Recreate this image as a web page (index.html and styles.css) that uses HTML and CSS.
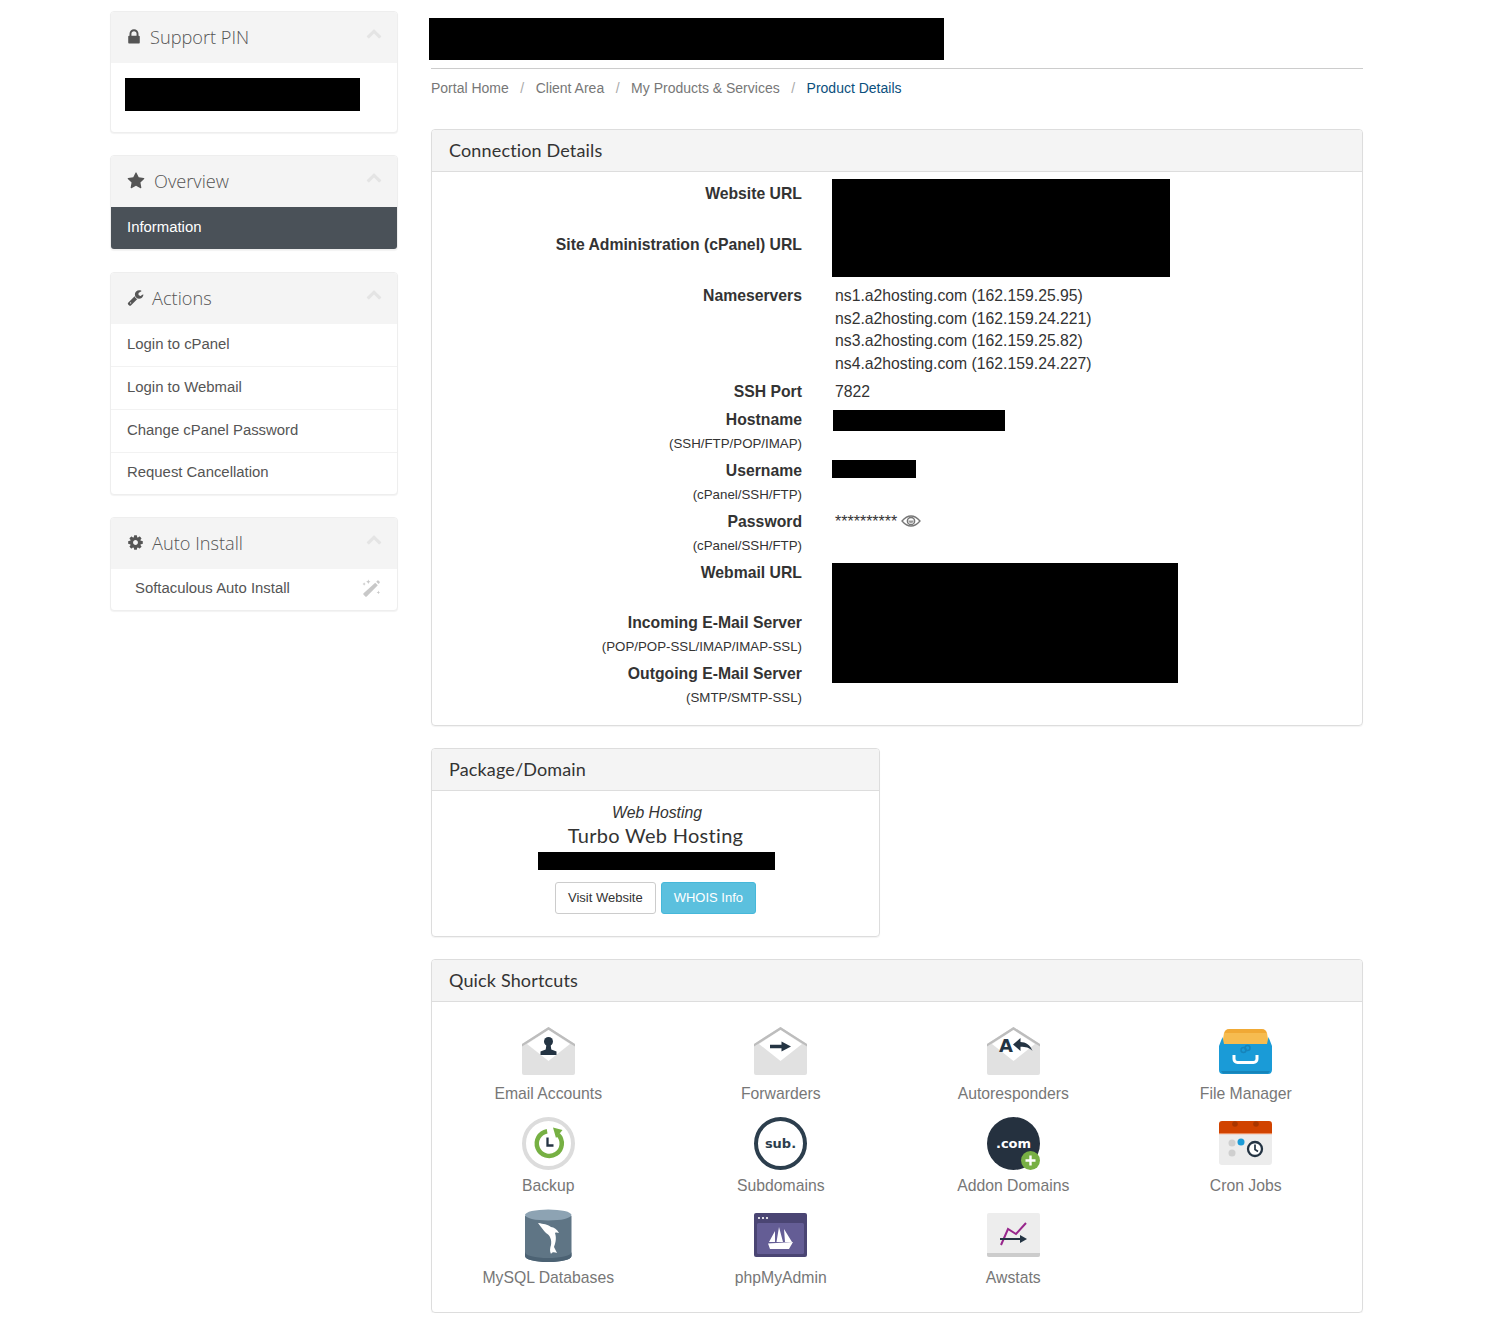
FILE: index.html
```html
<!DOCTYPE html>
<html lang="en">

<head>
  <meta charset="UTF-8" />
  <title>Product Details</title>
  <link rel="stylesheet" href="styles.css">
</head>

<body>
  <svg class="sprite" xmlns="http://www.w3.org/2000/svg">
    <symbol id="i-lock" viewBox="0 0 1792 1792"><path d="M640 768h512v-192q0-106-75-181t-181-75-181 75-75 181v192zm832 96v576q0 40-28 68t-68 28h-960q-40 0-68-28t-28-68v-576q0-40 28-68t68-28h32v-192q0-184 132-316t316-132 316 132 132 316v192h32q40 0 68 28t28 68z"/></symbol>
    <symbol id="i-star" viewBox="0 0 1792 1792"><path d="M1728 647q0 22-26 48l-363 354 86 500q1 7 1 20 0 21-10.500 35.500t-30.500 14.500q-19 0-40-12l-449-236-449 236q-22 12-40 12-21 0-31.500-14.500t-10.500-35.500q0-6 2-20l86-500-364-354q-25-27-25-48 0-37 56-46l502-73 225-455q19-41 49-41t49 41l225 455 502 73q56 9 56 46z"/></symbol>
    <symbol id="i-wrench" viewBox="0 0 1792 1792"><path d="M448 1472q0-26-19-45t-45-19-45 19-19 45 19 45 45 19 45-19 19-45zm644-420l-682 682q-37 37-90 37-52 0-91-37l-106-108q-38-36-38-90 0-53 38-91l681-681q39 98 114.500 173.500t173.500 114.500zm634-435q0 39-23 106-47 134-164.500 217.500t-258.500 83.500q-185 0-316.500-131.500t-131.500-316.500 131.500-316.500 316.500-131.500q58 0 121.500 16.500t107.500 46.500q16 11 16 28t-16 28l-293 169v224l193 107q5-3 79-48.500t135.500-81 70.500-35.500q15 0 23.500 10t8.500 25z"/></symbol>
    <symbol id="i-cog" viewBox="0 0 1792 1792"><path d="M1152 896q0-106-75-181t-181-75-181 75-75 181 75 181 181 75 181-75 75-181zm512-109v222q0 12-8 23t-20 13l-185 28q-19 54-39 91 35 50 107 138 10 12 10 25t-9 23q-27 37-99 108t-94 71q-12 0-26-9l-138-108q-44 23-91 38-16 136-29 186-7 28-36 28h-222q-14 0-24.500-8.500t-11.500-21.500l-28-184q-49-16-90-37l-141 107q-10 9-25 9-14 0-25-11-126-114-165-168-7-10-7-23 0-12 8-23 15-21 51-66.500t54-70.500q-27-50-41-99l-183-27q-13-2-21-12.500t-8-23.500v-222q0-12 8-23t19-13l186-28q14-46 39-92-40-57-107-138-10-12-10-24 0-10 9-23 26-36 98.500-107.500t94.500-71.500q13 0 26 10l138 107q44-23 91-38 16-136 29-186 7-28 36-28h222q14 0 24.500 8.500t11.500 21.500l28 184q49 16 90 37l142-107q9-9 24-9 13 0 25 10 129 119 165 170 7 8 7 22 0 12-8 23-15 21-51 66.500t-54 70.500q26 50 41 98l183 28q13 2 21 12.500t8 23.500z"/></symbol>
    <symbol id="i-up" viewBox="0 0 1792 1792"><path d="M1683 1331l-166 165q-19 19-45 19t-45-19l-531-531-531 531q-19 19-45 19t-45-19l-166-165q-19-19-19-45.500t19-45.500l742-741q19-19 45-19t45 19l742 741q19 19 19 45.500t-19 45.500z"/></symbol>
    <symbol id="i-envelope" viewBox="0 0 53 53">
      <path d="M0 19 26.500 2 53 19v29a2 2 0 0 1-2 2H2a2 2 0 0 1-2-2z" fill="#e1e1e1"/>
      <path d="M0 19 26.500 2 53 19v2.500L26.500 5 0 21.500z" fill="#bdbdbd"/>
      <path d="M26.500 5 48 19 26.500 36 5 19z" fill="#fff"/>
    </symbol>
  </svg>

  <div class="pagina">
    <aside class="lateral">
      <div class="caja">
        <div class="caja-titulo">
          <svg class="ico ico-lock"><use href="#i-lock"/></svg>
          <span>Support PIN</span>
          <svg class="flecha"><use href="#i-up"/></svg>
        </div>
        <div class="caja-pin">
          <div class="tapa tapa-pin"></div>
        </div>
      </div>

      <div class="caja">
        <div class="caja-titulo">
          <svg class="ico ico-star"><use href="#i-star"/></svg>
          <span>Overview</span>
          <svg class="flecha"><use href="#i-up"/></svg>
        </div>
        <a class="opcion activa">Information</a>
      </div>

      <div class="caja">
        <div class="caja-titulo">
          <svg class="ico ico-tool"><use href="#i-wrench"/></svg>
          <span>Actions</span>
          <svg class="flecha"><use href="#i-up"/></svg>
        </div>
        <a class="opcion">Login to cPanel</a>
        <a class="opcion">Login to Webmail</a>
        <a class="opcion">Change cPanel Password</a>
        <a class="opcion">Request Cancellation</a>
      </div>

      <div class="caja">
        <div class="caja-titulo">
          <svg class="ico ico-tool"><use href="#i-cog"/></svg>
          <span>Auto Install</span>
          <svg class="flecha"><use href="#i-up"/></svg>
        </div>
        <a class="opcion opcion-auto">
          <span>Softaculous Auto Install</span>
          <svg class="varita" viewBox="0 0 18 18">
            <path d="M12.500 3.500 15 6 4.500 16.500a1 1 0 0 1-1.400 0L1.500 14.900a1 1 0 0 1 0-1.400z" fill="#c8c8c8"/>
            <path d="M13.500 2.500 14.400 1.600a1 1 0 0 1 1.400 0l.8.800a1 1 0 0 1 0 1.400L15.700 4.700z" fill="#c8c8c8"/>
            <path d="M6 0.500 6.600 2 8 2.600 6.600 3.200 6 4.700 5.400 3.200 4 2.600 5.400 2zM2 3 2.500 4.200 3.500 4.700 2.500 5.200 2 6.400 1.500 5.200.5 4.700 1.500 4.200zM15.500 11 16 12.200 17.200 12.700 16 13.200 15.500 14.400 15 13.200 13.800 12.700 15 12.200z" fill="#c8c8c8"/>
          </svg>
        </a>
      </div>
    </aside>

    <main class="contenido">
      <div class="encabezado">
        <div class="tapa tapa-titulo"></div>
      </div>

      <ol class="migas">
        <li>Portal Home</li>
        <li>Client Area</li>
        <li>My Products &amp; Services</li>
        <li class="actual">Product Details</li>
      </ol>

      <section class="panel">
        <h3 class="panel-titulo">Connection Details</h3>
        <div class="datos">
          <div class="fila"><div class="etiqueta"><strong>Website URL</strong><small>&nbsp;</small></div><div class="valor"></div></div>
          <div class="fila"><div class="etiqueta"><strong>Site Administration (cPanel) URL</strong><small>&nbsp;</small></div><div class="valor"></div></div>
          <div class="fila">
            <div class="etiqueta"><strong>Nameservers</strong></div>
            <div class="valor">
              ns1.a2hosting.com (162.159.25.95)<br>
              ns2.a2hosting.com (162.159.24.221)<br>
              ns3.a2hosting.com (162.159.25.82)<br>
              ns4.a2hosting.com (162.159.24.227)
            </div>
          </div>
          <div class="fila"><div class="etiqueta"><strong>SSH Port</strong></div><div class="valor">7822</div></div>
          <div class="fila"><div class="etiqueta"><strong>Hostname</strong><small>(SSH/FTP/POP/IMAP)</small></div><div class="valor"></div></div>
          <div class="fila"><div class="etiqueta"><strong>Username</strong><small>(cPanel/SSH/FTP)</small></div><div class="valor"></div></div>
          <div class="fila">
            <div class="etiqueta"><strong>Password</strong><small>(cPanel/SSH/FTP)</small></div>
            <div class="valor clave">
              <span>**********</span>
              <svg class="ojo" viewBox="0 0 20 12">
                <path d="M1 6C4 2.500 7 1 10 1s6 1.500 9 5c-3 3.500-6 5-9 5S4 9.500 1 6z" fill="none" stroke="#777" stroke-width="1.300"/>
                <circle cx="10" cy="6" r="3.600" fill="none" stroke="#777" stroke-width="1.500"/>
                <path d="M7.500 5.500a2.500 2.500 0 0 0 5 0" fill="#999"/>
              </svg>
            </div>
          </div>
          <div class="fila"><div class="etiqueta"><strong>Webmail URL</strong><small>&nbsp;</small></div><div class="valor"></div></div>
          <div class="fila"><div class="etiqueta"><strong>Incoming E-Mail Server</strong><small>(POP/POP-SSL/IMAP/IMAP-SSL)</small></div><div class="valor"></div></div>
          <div class="fila"><div class="etiqueta"><strong>Outgoing E-Mail Server</strong><small>(SMTP/SMTP-SSL)</small></div><div class="valor"></div></div>

          <div class="tapa tapa-urls"></div>
          <div class="tapa tapa-host"></div>
          <div class="tapa tapa-user"></div>
          <div class="tapa tapa-correo"></div>
        </div>
      </section>

      <section class="panel panel-chico">
        <h3 class="panel-titulo">Package/Domain</h3>
        <div class="paquete">
          <em>Web Hosting</em>
          <h4>Turbo Web Hosting</h4>
          <div class="tapa tapa-dominio"></div>
          <div class="botones">
            <a class="boton">Visit Website</a>
            <a class="boton boton-info">WHOIS Info</a>
          </div>
        </div>
      </section>

      <section class="panel panel-ultimo">
        <h3 class="panel-titulo">Quick Shortcuts</h3>
        <div class="atajos">
          <a class="atajo">
            <svg class="icono" viewBox="0 0 53 53">
              <use href="#i-envelope"/>
              <circle cx="26.500" cy="16.500" r="4.500" fill="#243443"/>
              <path d="M24.500 19h4l.8 5.500 5.200 2V30h-16v-3.500l5.200-2z" fill="#243443"/>
            </svg>
            <span>Email Accounts</span>
          </a>
          <a class="atajo">
            <svg class="icono" viewBox="0 0 53 53">
              <use href="#i-envelope"/>
              <path d="M16 19.800h11.500v-3.300l9.500 5-9.500 5v-3.300H16z" fill="#243443"/>
            </svg>
            <span>Forwarders</span>
          </a>
          <a class="atajo">
            <svg class="icono" viewBox="0 0 53 53">
              <use href="#i-envelope"/>
              <text x="12" y="27" class="letra-a">A</text>
              <path d="M26 19.500 33.500 13v4c5 0 10 3 12 9-3-3.500-7-4.300-12-4.300V26z" fill="#243443"/>
            </svg>
            <span>Autoresponders</span>
          </a>
          <a class="atajo">
            <svg class="icono" viewBox="0 0 53 53">
              <path d="M5 9a5 5 0 0 1 5-5h33a5 5 0 0 1 5 5v6H5z" fill="#f0a935"/>
              <path d="M3 20 5 8h43l2 12z" fill="#f6bc50"/>
              <path d="M0 21 3.500 12 5 19h43l1.500-7L53 21v24a4 4 0 0 1-4 4H4a4 4 0 0 1-4-4z" fill="#1a9bd7"/>
              <path d="M2 46h49l-2 2.500H4z" fill="#1684ba"/>
              <path d="M15 30v4a3.500 3.500 0 0 0 3.500 3.500h16A3.500 3.500 0 0 0 38 34v-4" fill="none" stroke="#fff" stroke-width="3"/>
              <circle cx="24.500" cy="25" r="2.500" fill="none" stroke="#1684ba" stroke-width="1.500"/>
              <circle cx="28.500" cy="23" r="2.500" fill="none" stroke="#1684ba" stroke-width="1.500"/>
            </svg>
            <span>File Manager</span>
          </a>

          <a class="atajo">
            <svg class="icono" viewBox="0 0 53 53">
              <circle cx="26.500" cy="26.500" r="24.500" fill="#fff" stroke="#dcdcdc" stroke-width="4"/>
              <path d="M33.500 15.500A12.500 12.500 0 1 1 22 15" fill="none" stroke="#76b043" stroke-width="4.500" transform="rotate(15 26.500 26.500)"/>
              <path d="M31 10.500 40.500 13 34 21z" fill="#76b043"/>
              <path d="M25.500 20.500v8h6" fill="none" stroke="#243443" stroke-width="2.300"/>
            </svg>
            <span>Backup</span>
          </a>
          <a class="atajo">
            <svg class="icono" viewBox="0 0 53 53">
              <circle cx="26.500" cy="26.500" r="24.500" fill="#fff" stroke="#2c3e4d" stroke-width="4"/>
              <text x="26.500" y="31" class="letra-sub">sub.</text>
            </svg>
            <span>Subdomains</span>
          </a>
          <a class="atajo">
            <svg class="icono" viewBox="0 0 53 53">
              <circle cx="26.500" cy="26.500" r="26.500" fill="#25313f"/>
              <text x="26.500" y="31" class="letra-com">.com</text>
              <circle cx="43.500" cy="43.500" r="9.500" fill="#78b044"/>
              <path d="M42.300 38.500h2.400v3.800h3.800v2.400h-3.800v3.800h-2.400v-3.800h-3.800v-2.400h3.800z" fill="#fff"/>
            </svg>
            <span>Addon Domains</span>
          </a>
          <a class="atajo">
            <svg class="icono" viewBox="0 0 53 53">
              <path d="M0 17h53v28a3 3 0 0 1-3 3H3a3 3 0 0 1-3-3z" fill="#ececec"/>
              <path d="M0 7a3 3 0 0 1 3-3h47a3 3 0 0 1 3 3v10H0z" fill="#d14300"/>
              <rect y="16" width="53" height="1.200" fill="#ec8d5f"/>
              <circle cx="16" cy="7" r="2.800" fill="#a93600"/>
              <circle cx="37" cy="7" r="2.800" fill="#a93600"/>
              <circle cx="13" cy="26" r="3.500" fill="#cfcfcf"/>
              <circle cx="13" cy="36" r="3.500" fill="#cfcfcf"/>
              <circle cx="22" cy="25" r="3.500" fill="#1a9bd7"/>
              <circle cx="36" cy="32" r="7" fill="#fff" stroke="#243443" stroke-width="2.300"/>
              <path d="M36 27.500V32.500l3 2" fill="none" stroke="#243443" stroke-width="1.700"/>
            </svg>
            <span>Cron Jobs</span>
          </a>

          <a class="atajo">
            <svg class="icono" viewBox="0 0 53 53">
              <path d="M3 7h46.500v40c0 3.500-10 6-23.250 6S3 50.500 3 47z" fill="#5f7585"/>
              <path d="M3 43c0 3.500 10 6 23.250 6S49.500 46.500 49.500 43v4c0 3.500-10 6-23.250 6S3 50.500 3 47z" fill="#4c6273"/>
              <ellipse cx="26.250" cy="6" rx="23.250" ry="5.500" fill="#8da3b3"/>
              <path d="M16 14C22 15 25 15 29 18 32 18.500 35 20 37 24 35 23 33 23.500 33 24 35 30 33 35 32 38 33 40 34 42 35 44 32 43 30 43 29 45 27.500 42 28 39 29 36 30 31 28 26 24 24 22 22 19 18 16 14z" fill="#fff"/>
            </svg>
            <span>MySQL Databases</span>
          </a>
          <a class="atajo">
            <svg class="icono" viewBox="0 0 53 53">
              <rect y="4" width="53" height="44" rx="2" fill="#4a4573"/>
              <rect x="3" y="14" width="47" height="31" rx="1.500" fill="#645d95"/>
              <circle cx="5" cy="9" r="1.100" fill="#fff"/>
              <circle cx="9" cy="9" r="1.100" fill="#fff"/>
              <circle cx="13" cy="9" r="1.100" fill="#fff"/>
              <path d="M21 22 15 33h6zM25 18 22.500 33H29zM30 20l1 13h7z" fill="#fff"/>
              <path d="M14 34.500 39 33 35 40H16z" fill="#fff"/>
            </svg>
            <span>phpMyAdmin</span>
          </a>
          <a class="atajo">
            <svg class="icono" viewBox="0 0 53 53">
              <rect y="4" width="53" height="44" rx="2" fill="#ededed"/>
              <path d="M0 44h53v2a2 2 0 0 1-2 2H2a2 2 0 0 1-2-2z" fill="#cccccc"/>
              <path d="M14 36 21 20 29 25 39 14" fill="none" stroke="#98278c" stroke-width="2"/>
              <path d="M13 29h20v-3l7 4-7 4v-3H13z" fill="#243443"/>
            </svg>
            <span>Awstats</span>
          </a>
        </div>
      </section>
    </main>
  </div>
</body>

</html>
```

FILE: styles.css
```css
:root {
  --color-texto: #333;
  --color-gris: #555;
  --color-borde: #ddd;
  --color-cabecera: #f4f4f4;
  --borde-radius: 4px;
}

* {
  box-sizing: border-box;
}

body {
  margin: 0;
  font-family: "Liberation Sans", Arial, sans-serif;
  font-size: 14px;
  color: var(--color-texto);
  background: #fff;
}

.sprite {
  display: none;
}

.pagina {
  display: flex;
  gap: 33px;
  width: 1253px;
  margin-left: 110px;
}

.tapa {
  background: #000;
}

/* columna lateral */

.lateral {
  width: 288px;
  flex-shrink: 0;
  padding-top: 11px;
}

.caja {
  background: #fff;
  border: 1px solid #eee;
  border-radius: var(--borde-radius);
  box-shadow: 0 1px 1px rgba(0, 0, 0, 0.05);
  margin-bottom: 22px;
  overflow: hidden;
}

.caja-titulo {
  display: flex;
  align-items: center;
  height: 51px;
  padding: 0 16px 2px;
  background: var(--color-cabecera);
  font-family: "Open Sans", sans-serif;
  font-weight: 300;
  font-size: 18.2px;
  color: #555;
}

.caja-titulo span {
  flex: 1;
}

.ico {
  fill: #555;
  flex-shrink: 0;
}

.ico-lock {
  width: 18px;
  height: 18px;
  margin-left: -2px;
  margin-right: 7px;
}

.ico-star {
  width: 18px;
  height: 18px;
  margin-right: 9px;
}

.ico-tool {
  width: 17px;
  height: 17px;
  margin-right: 8px;
}

.flecha {
  width: 16px;
  height: 16px;
  margin-top: -7px;
  margin-right: -1px;
  fill: #e4e4e4;
}

.caja-pin {
  height: 69px;
  padding: 15px 14px 0;
}

.tapa-pin {
  width: 235px;
  height: 33px;
}

.opcion {
  display: flex;
  align-items: center;
  height: 43px;
  padding: 0 16px 3px;
  font-size: 14.9px;
  color: var(--color-gris);
  border-bottom: 1px solid #f2f2f2;
}

.opcion:last-child {
  border-bottom: none;
  height: 41px;
}

.opcion.activa {
  height: 42px;
  padding-bottom: 2px;
  background: #4a5158;
  color: #fff;
}

.opcion-auto {
  justify-content: space-between;
  padding-left: 24px;
}

.varita {
  width: 19px;
  height: 19px;
}

/* contenido */

.contenido {
  width: 932px;
}

.encabezado {
  height: 69px;
  padding-top: 18px;
  border-bottom: 1px solid #ccc;
}

.tapa-titulo {
  width: 515px;
  height: 42px;
  margin-left: -2px;
}

.migas {
  display: flex;
  list-style: none;
  margin: 0 0 32px;
  padding: 11px 0 0;
  height: 28px;
  line-height: 17px;
  color: #777;
}

.migas li + li::before {
  content: "/";
  padding: 0 11.5px;
  color: #aaa;
}

.migas .actual {
  color: #0b4f7d;
}

.panel {
  border: 1px solid var(--color-borde);
  border-radius: var(--borde-radius);
  box-shadow: 0 1px 1px rgba(0, 0, 0, 0.05);
  margin-bottom: 22px;
  overflow: hidden;
}

.panel-chico {
  width: 449px;
}

.panel-ultimo {
  margin-bottom: 0;
}

.panel-titulo {
  margin: 0;
  height: 42px;
  padding: 0 17px;
  line-height: 41px;
  background: var(--color-cabecera);
  border-bottom: 1px solid var(--color-borde);
  font-family: Lato, sans-serif;
  font-weight: 400;
  font-size: 18px;
  letter-spacing: 0.15px;
  color: var(--color-texto);
}

.datos {
  position: relative;
  padding: 11px 0 11px;
  font-size: 15.75px;
}

.fila {
  display: flex;
  gap: 33px;
  margin-bottom: 5px;
  line-height: 22.86px;
}

.etiqueta {
  width: 370px;
  flex-shrink: 0;
  text-align: right;
}

.etiqueta strong {
  display: block;
}

.etiqueta small {
  display: block;
  margin-top: 1px;
  margin-bottom: -0.86px;
  font-size: 13.3px;
  line-height: 22.86px;
}

.clave {
  display: flex;
  align-items: flex-start;
  gap: 4px;
  font-size: 16px;
}

.ojo {
  width: 20px;
  height: 12px;
  margin-top: 4px;
}

.tapa-urls,
.tapa-host,
.tapa-user,
.tapa-correo {
  position: absolute;
  left: 400px;
}

.tapa-urls {
  top: 7px;
  width: 338px;
  height: 98px;
}

.tapa-host {
  top: 238px;
  left: 401px;
  width: 172px;
  height: 21px;
}

.tapa-user {
  top: 288px;
  width: 84px;
  height: 18px;
}

.tapa-correo {
  top: 391px;
  width: 346px;
  height: 120px;
}

.paquete {
  height: 145px;
  padding-top: 11px;
  text-align: center;
  font-size: 15.75px;
  line-height: 22.86px;
}

.paquete em {
  display: block;
  padding-left: 3px;
}

.paquete h4 {
  margin: -2px 0 0;
  font-family: Lato, sans-serif;
  font-weight: 400;
  font-size: 20px;
  line-height: 24px;
  letter-spacing: 0.3px;
}

.tapa-dominio {
  width: 237px;
  height: 18px;
  margin: 5px auto 12px;
  transform: translateX(1px);
}

.botones {
  display: flex;
  justify-content: center;
  gap: 5px;
}

.boton {
  height: 32px;
  padding: 0 12px;
  border: 1px solid #ccc;
  border-radius: 3px;
  font-size: 13px;
  line-height: 30px;
  background: #fff;
  color: var(--color-texto);
}

.boton-info {
  background: #5bc0de;
  border-color: #46b8da;
  color: #fff;
}

.atajos {
  display: grid;
  grid-template-columns: repeat(4, 1fr);
  grid-auto-rows: 92px;
  padding: 23px 0 11px;
}

.atajo {
  display: flex;
  flex-direction: column;
  align-items: center;
  font-size: 15.75px;
  line-height: 22px;
  color: #777;
}

.atajo span {
  margin-top: 5px;
}

.icono {
  display: block;
  width: 53px;
  height: 53px;
}

.letra-a,
.letra-sub,
.letra-com {
  font-family: "DejaVu Sans", sans-serif;
  font-weight: 700;
}

.letra-a {
  font-size: 18px;
  fill: #243443;
}

.letra-sub {
  font-size: 13px;
  text-anchor: middle;
  fill: #2c3e4d;
}

.letra-com {
  font-size: 13px;
  text-anchor: middle;
  fill: #fff;
}
```
